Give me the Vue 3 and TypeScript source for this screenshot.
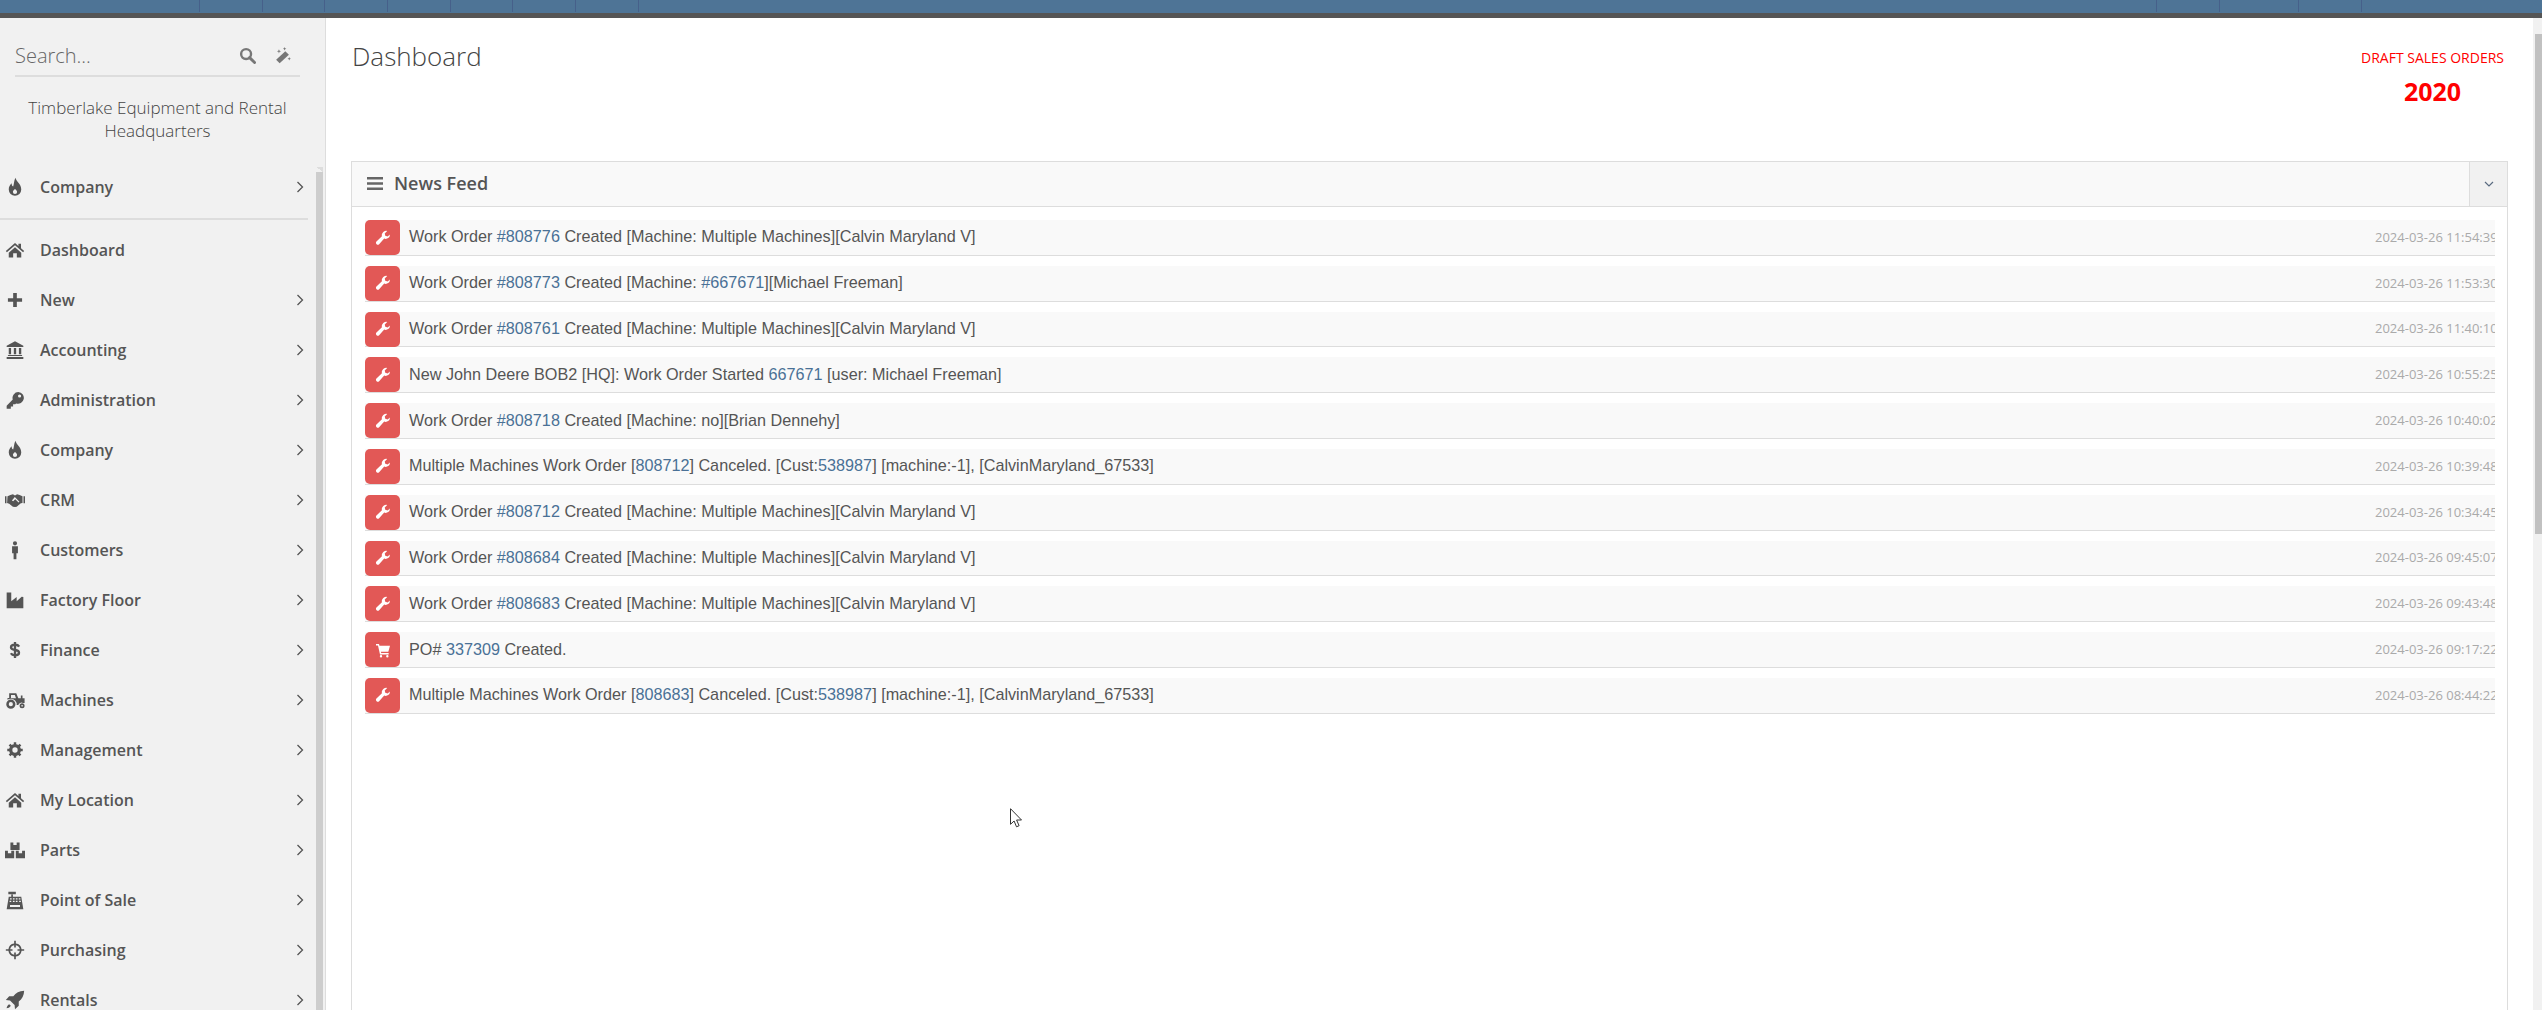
<script setup lang="ts">
interface Seg { t: string; link?: boolean }
interface Feed { icon: 'wrench' | 'cart'; segs: Seg[]; time: string }
interface NavItem { label: string; icon: string }

const leftDividers = [199, 262, 324, 387, 450, 512, 575, 638]
const rightDividers = [2156, 2219, 2298, 2361]

function gearPath(): string {
  const teeth = 8
  const pts: string[] = []
  for (let i = 0; i < teeth; i++) {
    const step = (Math.PI * 2) / teeth
    const a = i * step
    const p = [
      [7, a - step * 0.5],
      [7.2, a - step * 0.26],
      [9.4, a - step * 0.2],
      [9.4, a + step * 0.2],
      [7.2, a + step * 0.26]
    ]
    for (const [r, t] of p) {
      pts.push(`${(12 + r * Math.cos(t)).toFixed(2)} ${(12 + r * Math.sin(t)).toFixed(2)}`)
    }
  }
  return `M${pts.join('L')}Z M12 8.800a3.200 3.200 0 1 0 0 6.400a3.200 3.200 0 1 0 0-6.400Z`
}

const icons: Record<string, string> = {
  fire: 'M12.500 1c1 4.500 7 7.500 7 14a7.500 7.500 0 0 1-15 0c0-3.500 1.500-5.500 3.500-7.500 0 2 .5 3.500 1.800 4C11 8.500 10.500 5 12.500 1Z M12 14.500c-1.500 1.300-2.500 2.500-2.500 3.500a2.500 2.500 0 0 0 5 0c0-1-1-2.200-2.500-3.500Z',
  home: 'M12 3.500 1 13.200l1.300 1.600L12 6.300l9.700 8.500 1.300-1.600-3.800-3.400V4.500h-3.100v2.800Z M4.500 15.200 12 8.600l7.500 6.600V21h-5.300v-5H9.800v5H4.500Z',
  plus: 'M9.800 3.500h4.400v6.300h6.300v4.400h-6.300v6.300H9.800v-6.300H3.500V9.800h6.300Z',
  bank: 'M12 1.500 2 6.800V8.300h20V6.800Z M4.500 9.500h2.800v7.500H4.500Z M10.600 9.500h2.800v7.500h-2.800Z M16.700 9.500h2.800v7.500h-2.800Z M3.500 18h17v1.300h-17Z M2 20.500h20v2.300H2Z',
  key: 'M16 2.500a7 7 0 0 0-6.700 9L2 18.800V22.500h5v-2.700h2.700v-2.700h2.600l1-1a7 7 0 1 0 2.700-13.600Z M17.500 5.300a1.900 1.900 0 1 1 0 3.800a1.900 1.900 0 1 1 0-3.800Z',
  handshake: 'M0 7.500h1.800v8.500H0Z M22.200 7.500H24v8.500h-1.800Z M3 7.500 6.500 6 9.500 5 12 6.500 14.500 5l3 1 3.500 1.500v8l-2 .5-5 4-2 .5-2.500-.5-4.500-3.500-2.500-1Z M11.800 8.500l-3.500 4 1.500 1 2.500-2.500 4 4 1-1-5.500-5.500Z',
  male: 'M12 1.500a2.500 2.500 0 1 1 0 5a2.500 2.500 0 1 1 0-5Z M8.500 7.500h7v8.500h-1.800v7h-3.400v-7H8.500Z',
  industry: 'M2 3h5.500v10.500L14 8.500v5l6-5.500 2 .5V22H2Z',
  tractor: 'M7 11.500a5.500 5.500 0 1 1 0 11a5.500 5.500 0 1 1 0-11Z M7 14.500a2.500 2.500 0 1 0 0 5a2.500 2.500 0 1 0 0-5Z M20.500 16a3 3 0 1 1 0 6a3 3 0 1 1 0-6Z M20.500 18a1 1 0 1 0 0 2a1 1 0 1 0 0-2Z M5 4h8.500l2.500 6h3V6.500h2V10h2.500v5.500h-2a4 4 0 0 0-5.500 2.500H14a7 7 0 0 0-7-7.500 7 7 0 0 0-4 1.300V9.500h2Z M7.200 6v3.800h6L11.800 6Z',
  gear: gearPath(),
  cubes: 'M6.500 3h3.500v3h4V3h3.500v9h-11Z M0 13h3.500v3h4v-3H11v9H0Z M13 13h3.500v3h4v-3H24v9H13Z',
  register: 'M4 2h9v3H4Z M7.500 5.500h2V8h10l2.500 15H2L4.500 8h3Z M6 10v1.500h2V10Z M9.500 10v1.500h2V10Z M13 10v1.500h2V10Z M16.500 10v1.500h2V10Z M5.500 13v1.500h2V13Z M9.500 13v1.500h2V13Z M13 13v1.500h2V13Z M17 13v1.500h2V13Z M6 18v2.500h12V18Z',
  crosshairs: 'M11 1h2v3.100a8 8 0 0 1 6.900 6.900H23v2h-3.100a8 8 0 0 1-6.900 6.900V23h-2v-3.100A8 8 0 0 1 4.100 13H1v-2h3.100A8 8 0 0 1 11 4.100Z M11 6.200A6 6 0 0 0 6.200 11H9v2H6.200a6 6 0 0 0 4.800 4.800V15h2v2.800a6 6 0 0 0 4.800-4.800H15v-2h2.800A6 6 0 0 0 13 6.200V9h-2Z',
  rocket: 'M23 1c-6 .2-10 2.500-13 6.500H5L1 12l5 .5 5.500 5.500.5 5 4.500-4v-5.200c4-3 6.300-7 6.500-12.800Z M5 17c-2 1-3 3.500-3 5 1.500 0 4-1 5-3Z',
  wrench: 'M22.500 6.800a6.500 6.500 0 0 1-8.700 6.100l-7.600 8.400a2.800 2.800 0 0 1-4-3.900l8.200-8A6.500 6.500 0 0 1 18.300 1.500L14.600 5.200l.8 3.500 3.500.9Z',
  cart: 'M1.500 3H6l.7 2.500H22.500L20 14.500H8.800l.5 2H20.500v2.200H7.500L4.500 5.200h-3Z M9 19.500a1.800 1.800 0 1 1 0 3.600a1.800 1.800 0 1 1 0-3.600Z M18.500 19.500a1.800 1.800 0 1 1 0 3.600a1.800 1.800 0 1 1 0-3.600Z'
}

const nav: NavItem[] = [
  { label: 'New', icon: 'plus' },
  { label: 'Accounting', icon: 'bank' },
  { label: 'Administration', icon: 'key' },
  { label: 'Company', icon: 'fire' },
  { label: 'CRM', icon: 'handshake' },
  { label: 'Customers', icon: 'male' },
  { label: 'Factory Floor', icon: 'industry' },
  { label: 'Finance', icon: 'dollar' },
  { label: 'Machines', icon: 'tractor' },
  { label: 'Management', icon: 'gear' },
  { label: 'My Location', icon: 'home' },
  { label: 'Parts', icon: 'cubes' },
  { label: 'Point of Sale', icon: 'register' },
  { label: 'Purchasing', icon: 'crosshairs' },
  { label: 'Rentals', icon: 'rocket' }
]

function workOrder(id: string, rest: Seg[]): Seg[] {
  return [{ t: 'Work Order ' }, { t: `#${id}`, link: true }, { t: ' Created [Machine: ' }, ...rest]
}
const multi: Seg[] = [{ t: 'Multiple Machines][Calvin Maryland V]' }]
function cancelled(id: string): Seg[] {
  return [
    { t: 'Multiple Machines Work Order [' },
    { t: id, link: true },
    { t: '] Canceled. [Cust:' },
    { t: '538987', link: true },
    { t: '] [machine:-1], [CalvinMaryland_67533]' }
  ]
}

const feed: Feed[] = [
  { icon: 'wrench', segs: workOrder('808776', multi), time: '2024-03-26 11:54:39' },
  { icon: 'wrench', segs: workOrder('808773', [{ t: '#667671', link: true }, { t: '][Michael Freeman]' }]), time: '2024-03-26 11:53:30' },
  { icon: 'wrench', segs: workOrder('808761', multi), time: '2024-03-26 11:40:10' },
  { icon: 'wrench', segs: [{ t: 'New John Deere BOB2 [HQ]: Work Order Started ' }, { t: '667671', link: true }, { t: ' [user: Michael Freeman]' }], time: '2024-03-26 10:55:25' },
  { icon: 'wrench', segs: workOrder('808718', [{ t: 'no][Brian Dennehy]' }]), time: '2024-03-26 10:40:02' },
  { icon: 'wrench', segs: cancelled('808712'), time: '2024-03-26 10:39:48' },
  { icon: 'wrench', segs: workOrder('808712', multi), time: '2024-03-26 10:34:45' },
  { icon: 'wrench', segs: workOrder('808684', multi), time: '2024-03-26 09:45:07' },
  { icon: 'wrench', segs: workOrder('808683', multi), time: '2024-03-26 09:43:48' },
  { icon: 'cart', segs: [{ t: 'PO# ' }, { t: '337309', link: true }, { t: ' Created.' }], time: '2024-03-26 09:17:22' },
  { icon: 'wrench', segs: cancelled('808683'), time: '2024-03-26 08:44:22' }
]
</script>

<template>
  <div class="app">
    <header class="topbar">
      <div class="tabs">
        <i v-for="x in leftDividers" :key="x" class="tab-line" :style="{ left: x + 'px' }"></i>
        <i v-for="x in rightDividers" :key="x" class="tab-line" :style="{ left: x + 'px' }"></i>
      </div>
      <div class="topbar-edge"></div>
    </header>

    <div class="body">
      <aside class="sidebar">
        <div class="search">
          <span class="search-text">Search...</span>
          <svg class="search-icon" viewBox="0 0 24 24"><circle cx="10" cy="10" r="7" fill="none" stroke="#777" stroke-width="3.400" /><path d="M15 15l7 7" stroke="#777" stroke-width="4" stroke-linecap="round" /></svg>
          <svg class="wand-icon" viewBox="0 0 24 24"><path d="M16 6l5 5L8 23l-5-5Z" fill="#777" /><path d="M7 3l.8 2.200L10 6l-2.200.8L7 9l-.8-2.200L4 6l2.200-.8Z M15 0l.7 1.800 1.800.7-1.800.7L15 5l-.7-1.800-1.800-.7 1.800-.7Z M21.500 14l.7 1.800 1.800.7-1.800.7-.7 1.800-.7-1.800-1.800-.7 1.800-.7Z" fill="#777" /></svg>
        </div>
        <p class="location">Timberlake Equipment and Rental Headquarters</p>

        <div class="lower">
          <nav class="nav">
            <a class="nav-row nav-company">
              <span class="nav-icon"><svg viewBox="0 0 24 24"><path :d="icons.fire" fill-rule="evenodd" /></svg></span>
              <span class="nav-label">Company</span>
              <svg class="chev" viewBox="0 0 8 12"><path d="M1.500 1l5 5-5 5" /></svg>
            </a>
            <div class="nav-divider"></div>
            <a class="nav-row">
              <span class="nav-icon"><svg viewBox="0 0 24 24"><path :d="icons.home" fill-rule="evenodd" /></svg></span>
              <span class="nav-label">Dashboard</span>
            </a>
            <a v-for="item in nav" :key="item.label" class="nav-row">
              <span class="nav-icon">
                <svg v-if="item.icon === 'dollar'" viewBox="0 0 24 24"><path d="M17 8c-1-1.700-2.700-2.300-5-2.300-2.800 0-4.800 1.200-4.800 3.100s2 2.800 4.800 3.200 4.800 1.300 4.800 3.200-2 3.100-4.800 3.100c-2.300 0-4-.7-5-2.400 M12 2.500v19" fill="none" stroke="#555" stroke-width="2.800" /></svg>
                <svg v-else viewBox="0 0 24 24"><path :d="icons[item.icon]" fill-rule="evenodd" /></svg>
              </span>
              <span class="nav-label">{{ item.label }}</span>
              <svg class="chev" viewBox="0 0 8 12"><path d="M1.500 1l5 5-5 5" /></svg>
            </a>
          </nav>
          <div class="side-scroll">
            <i class="side-arrow"></i>
            <i class="side-thumb"></i>
          </div>
        </div>
      </aside>

      <main class="main">
        <div class="page-head">
          <h1 class="page-title">Dashboard</h1>
          <div class="draft">
            <span class="draft-label">DRAFT SALES ORDERS</span>
            <strong class="draft-count">2020</strong>
          </div>
        </div>

        <section class="panel">
          <div class="panel-head">
            <svg class="burger" viewBox="0 0 16 13"><path d="M0 0h16v2.600H0Z M0 5.200h16v2.600H0Z M0 10.400h16V13H0Z" /></svg>
            <h2 class="panel-title">News Feed</h2>
            <button class="collapse" type="button">
              <svg viewBox="0 0 10 6"><path d="M1 1l4 4 4-4" /></svg>
            </button>
          </div>
          <div class="panel-body">
            <div v-for="(row, i) in feed" :key="i" class="feed-row">
              <span class="feed-icon"><svg viewBox="0 0 24 24"><path :d="icons[row.icon]" fill-rule="evenodd" /></svg></span>
              <span class="feed-text"><template v-for="(s, j) in row.segs" :key="j"><a v-if="s.link" class="feed-link">{{ s.t }}</a><template v-else>{{ s.t }}</template></template></span>
              <span class="feed-time">{{ row.time }}</span>
            </div>
          </div>
        </section>
      </main>

      <div class="page-scroll">
        <i class="page-arrow"></i>
        <i class="page-thumb"></i>
      </div>
    </div>

    <svg class="cursor" viewBox="0 0 12 20"><path d="M.5.700V16.300l3.600-3.300 2.400 5.800 2.600-1.100-2.500-5.700h4.900Z" fill="#fff" stroke="#333" stroke-width="1" /></svg>
  </div>
</template>

<style>
html, body { margin: 0; padding: 0; overflow: hidden; background: #fff; }
</style>

<style scoped>
.app {
  position: relative;
  display: flex;
  flex-direction: column;
  height: 1010px;
  overflow: hidden;
  font-family: "Open Sans", sans-serif;
  color: #555;
}
.topbar { flex: none; }
.tabs { position: relative; height: 13px; background: #4e7496; }
.tab-line { position: absolute; top: 0; width: 1px; height: 12px; background: #46608a; }
.topbar-edge { height: 5px; background: #555; }

.body { flex: 1; min-height: 0; display: flex; }

.sidebar {
  flex: none;
  width: 325px;
  border-right: 1px solid #ddd;
  background: #f1f1f1;
  display: flex;
  flex-direction: column;
}
.search {
  display: flex;
  align-items: center;
  height: 41px;
  margin: 18px 25px 0 15px;
  border-bottom: 2px solid #ddd;
  box-sizing: border-box;
}
.search-text { flex: 1; font-size: 20px; font-weight: 300; color: #666; }
.search-icon { width: 17px; height: 17px; margin-right: 18px; }
.wand-icon { width: 17px; height: 17px; margin-right: 9px; }
.location {
  margin: 19px 25px 0 15px;
  font-size: 17px;
  font-weight: 300;
  line-height: 23px;
  text-align: center;
  color: #444;
}
.lower { flex: 1; min-height: 0; display: flex; margin-top: 25px; overflow: hidden; }
.nav { flex: none; width: 316px; }
.nav-row { display: flex; align-items: center; height: 50px; padding-right: 12px; box-sizing: border-box; }
.nav-company { height: 40px; }
.nav-divider { height: 1.500px; width: 308px; margin: 11px 0 5px; background: #ddd; }
.nav-icon { flex: none; width: 30px; display: flex; justify-content: center; margin-right: 10px; }
.nav-icon svg { width: 20px; height: 20px; fill: #555; }
.nav-label { flex: 1; font-size: 16px; font-weight: 600; color: #555; }
.chev { flex: none; width: 8px; height: 12px; }
.chev path { fill: none; stroke: #555; stroke-width: 1.300; }

.side-scroll { flex: none; width: 7px; display: flex; flex-direction: column; }
.side-arrow {
  height: 5px;
  flex: none;
  background: linear-gradient(to top right, #f1f1f1 50%, #ddd 50%);
}
.side-thumb { flex: 1; background: #cdcdcd; }

.main { flex: 1; min-width: 0; padding: 0 25px; display: flex; flex-direction: column; overflow: hidden; }
.page-head { flex: none; height: 143px; display: flex; justify-content: space-between; }
.page-title {
  margin: 23px 0 0 1px;
  font-size: 26px;
  line-height: 30px;
  font-weight: 300;
  color: #444;
}
.draft {
  display: flex;
  flex-direction: column;
  align-items: center;
  margin: 30px 4px 0 0;
  color: #f00;
}
.draft-label { font-size: 14px; line-height: 20px; }
.draft-count { font-size: 25px; line-height: 33px; margin-top: 7px; font-weight: 700; }

.panel { flex: none; height: 900px; border: 1px solid #ddd; box-sizing: border-box; }
.panel-head {
  display: flex;
  align-items: center;
  height: 45px;
  padding-left: 15px;
  background: #f9f9f9;
  border-bottom: 1px solid #ddd;
  box-sizing: border-box;
}
.burger { width: 16px; height: 13px; margin-right: 11px; margin-bottom: 1px; fill: #666; }
.panel-title { flex: 1; margin: 0 0 2px; font-size: 18px; font-weight: 600; color: #555; }
.collapse {
  align-self: stretch;
  width: 38px;
  padding: 0;
  border: 0;
  border-left: 1px solid #ddd;
  background: #f1f1f1;
  display: flex;
  align-items: center;
  justify-content: center;
}
.collapse svg { width: 10px; height: 6px; }
.collapse path { fill: none; stroke: #5a6b80; stroke-width: 1.200; }

.panel-body { padding: 13px 12px 0 13px; }
.feed-row {
  display: flex;
  align-items: center;
  height: 35.800px;
  margin-bottom: 10px;
  box-sizing: border-box;
  background: #f9f9f9;
  border-bottom: 1.500px solid #ddd;
  font-family: "Liberation Sans", sans-serif;
}
.feed-icon {
  flex: none;
  align-self: flex-start;
  width: 35px;
  height: 35px;
  border-radius: 5px;
  background: #e25856;
  display: flex;
  align-items: center;
  justify-content: center;
  margin-right: 9px;
}
.feed-icon svg { width: 16px; height: 16px; fill: #fff; }
.feed-text { flex: 1; min-width: 0; font-size: 16.200px; color: #555; white-space: nowrap; margin-bottom: 1px; }
.feed-link { color: #4a7196; }
.feed-time {
  flex: none;
  width: 120px;
  overflow: hidden;
  white-space: nowrap;
  font-family: "Open Sans", sans-serif;
  font-size: 13px;
  margin-bottom: 1px;
  color: #aaa;
}

.page-scroll { flex: none; width: 9px; background: #f1f1f1; display: flex; flex-direction: column; align-items: flex-end; }
.page-arrow {
  flex: none;
  width: 7px;
  height: 16px;
  background: linear-gradient(to top left, transparent 60%, #f1f1f1 60%);
}
.page-thumb { flex: none; width: 7px; height: 500px; background: #c1c1c1; }

.cursor { position: absolute; left: 1010px; top: 808px; width: 12px; height: 20px; }
</style>
